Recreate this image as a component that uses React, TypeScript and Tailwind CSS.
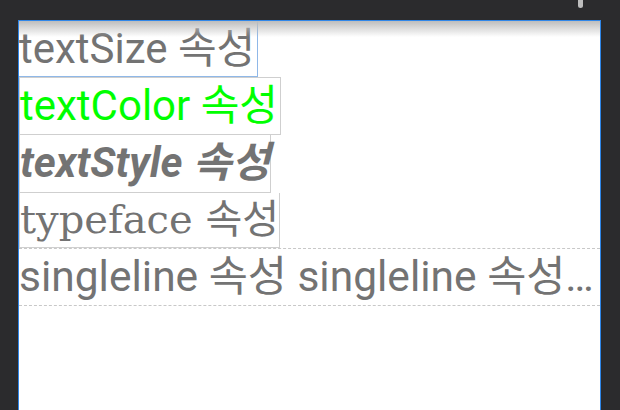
export default function App() {
  const sans = "font-['Roboto','Noto_Sans_CJK_KR',sans-serif]";
  return (
    <div className="relative h-[410px] w-[620px] overflow-hidden bg-[#2b2b2d]">
      {/* scrollbar thumb */}
      <div className="absolute left-[578px] top-0 h-[8px] w-[5px] rounded-b-sm bg-[#bdbdbd]" />

      <div className="relative ml-[18px] mt-[20px] h-[390px] w-[583px] border-x border-t border-[#2f86e8] bg-white">
        <div className="pointer-events-none absolute inset-x-0 top-0 h-[16px] bg-gradient-to-b from-[#bdbdbd] to-white/0" />

        <div className="flex flex-col items-start">
          <div className={`h-[56px] border-r border-b border-[#8fb8e8] pr-[2px] text-[42px] leading-[56px] text-[#737373] ${sans}`}>
            textSize 속성
          </div>
          <div className={`h-[58px] border border-[#cfcfcf] pr-[2px] text-[42px] leading-[56px] text-[#00ff00] ${sans}`}>
            textColor 속성
          </div>
          <div className={`h-[58px] border border-t-0 border-[#cfcfcf] text-[42px] font-bold italic leading-[56px] text-[#737373] ${sans}`}>
            textStyle 속성
          </div>
          <div className="h-[55px] border border-t-0 border-[#cfcfcf] font-['DejaVu_Serif','Noto_Sans_CJK_KR',serif] text-[40px] leading-[52px] text-[#737373]">
            typeface 속성
          </div>
          <div className={`h-[58px] w-full overflow-hidden text-ellipsis whitespace-nowrap border-y border-dashed border-[#c8c8c8] pr-[4px] text-[42.5px] leading-[56px] text-[#737373] ${sans}`}>
            singleline 속성 singleline 속성 singleline 속성
          </div>
        </div>
      </div>
    </div>
  );
}
